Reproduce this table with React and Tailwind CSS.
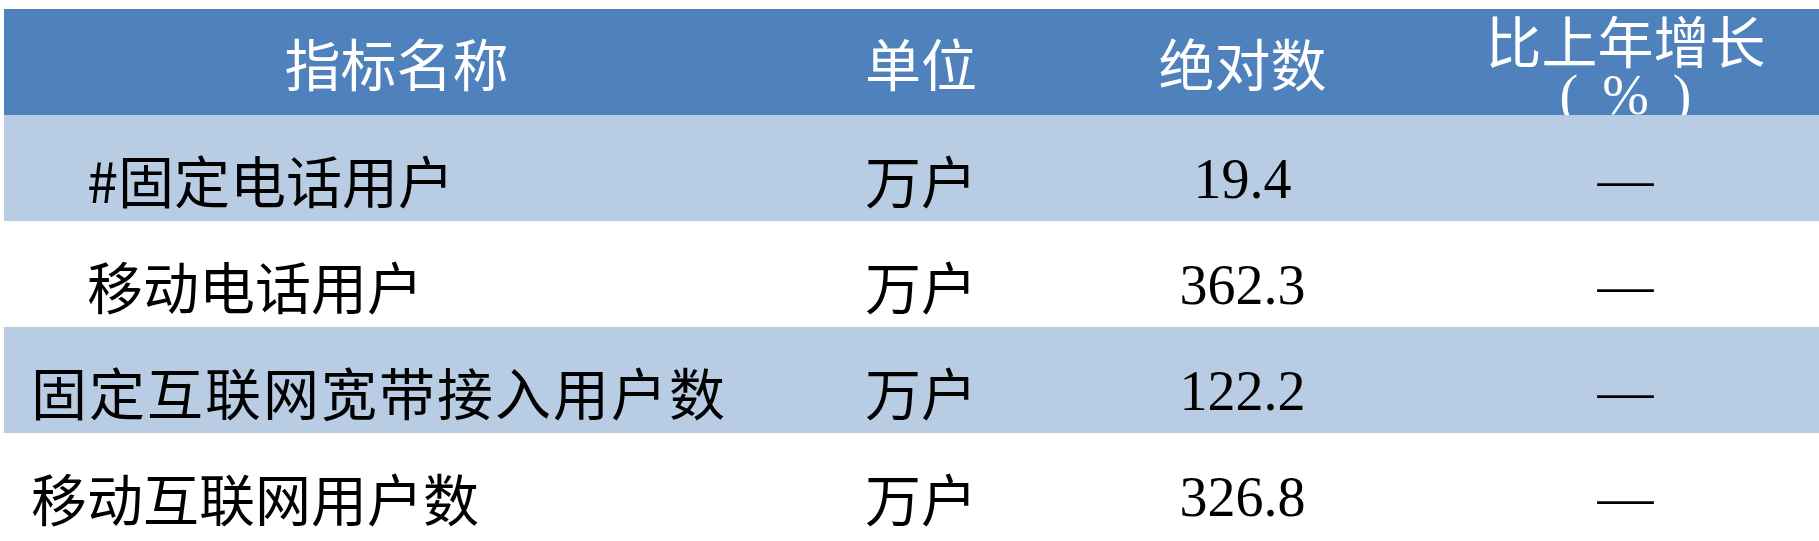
const rows = [
  { name: "#固定电话用户", indent: true, unit: "万户", value: "19.4", band: true },
  { name: "移动电话用户", indent: true, unit: "万户", value: "362.3", band: false },
  { name: "固定互联网宽带接入用户数", indent: false, unit: "万户", value: "122.2", band: true, wide: true },
  { name: "移动互联网用户数", indent: false, unit: "万户", value: "326.8", band: false },
]

const cjk = "font-['Noto_Sans_CJK_SC',sans-serif]"
const cols = "grid grid-cols-[785px_264px_379px_1fr]"

export default function App() {
  return (
    <div className="w-[1819px] h-[541px] overflow-hidden bg-white pt-[9px] pl-[4px]">
      {/* header */}
      <div className={`${cols} h-[106px] bg-[#4f81bd] text-white text-[56px] ${cjk}`}>
        <div className="flex items-center justify-center leading-none">指标名称</div>
        <div className="flex items-center justify-center leading-none">单位</div>
        <div className="flex items-center justify-center leading-none">绝对数</div>
        <div className="overflow-hidden flex flex-col items-center leading-[60px]">
          <span>比上年增长</span>
          <span className="flex font-['Liberation_Serif',serif] -mt-[4px]">
            <span>(</span>
            <span className="mx-[24px]">%</span>
            <span>)</span>
          </span>
        </div>
      </div>

      {/* body */}
      {rows.map((row) => (
        <div
          key={row.name}
          className={`${cols} h-[106px] text-black text-[56px] ${row.band ? "bg-[#b8cce4]" : "bg-white"}`}
        >
          <div
            className={`flex items-center leading-none pt-[22px] whitespace-nowrap ${cjk} ${row.indent ? "pl-[83px]" : "pl-[27px]"} ${row.wide ? "tracking-[2px]" : ""}`}
          >
            {row.name}
          </div>
          <div className={`flex items-center justify-center leading-none pt-[22px] ${cjk}`}>{row.unit}</div>
          <div className="flex items-center justify-center leading-none pt-[22px] font-['Liberation_Serif',serif]">
            {row.value}
          </div>
          <div className="flex items-center justify-center leading-none pt-[22px] font-['Liberation_Serif',serif]">
            —
          </div>
        </div>
      ))}
    </div>
  )
}
